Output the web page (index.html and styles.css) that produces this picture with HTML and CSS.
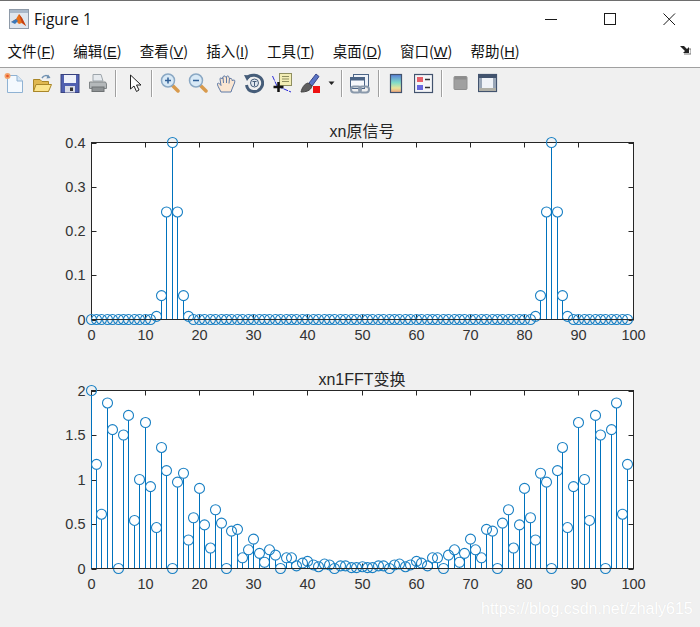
FILE: index.html
```html
<!DOCTYPE html>
<html lang="en">
<head>
    <meta charset="UTF-8">
    <title>Figure 1</title>
    <link rel="stylesheet" href="styles.css">
</head>
<body>
    <div class="window">
        <div class="titlebar">
            <svg class="app-icon" width="20" height="20" viewBox="0 0 20 20">
                <rect x="0.5" y="0.5" width="19" height="19" fill="#dfe6ee" stroke="#8e9aa8"/>
                <rect x="1" y="1" width="18" height="3" fill="#a9b8c9"/>
                <path d="M2 13 L7 10 L10 5 L13 9 L17 17 L13 14 L10 15 L7 12 Z" fill="#e8701a"/>
                <path d="M2 13 L7 10 L9 12 L6 15 Z" fill="#3b78b8"/>
                <path d="M10 5 L13 9 L17 17 L13 14 Z" fill="#c43f12"/>
            </svg>
            <span class="window-title">Figure 1</span>
            <div class="window-controls">
                <svg width="13" height="13" viewBox="0 0 13 13"><path d="M0 6.5H12" stroke="#1a1a1a" fill="none"/></svg>
                <svg width="13" height="13" viewBox="0 0 13 13"><rect x="0.5" y="0.5" width="11" height="11" stroke="#1a1a1a" fill="none"/></svg>
                <svg width="13" height="13" viewBox="0 0 13 13"><path d="M0.5 0.5L12 12M12 0.5L0.5 12" stroke="#1a1a1a" fill="none"/></svg>
            </div>
        </div>

        <div class="menubar">
            <span class="menu-item">文件(<u>F</u>)</span>
            <span class="menu-item">编辑(<u>E</u>)</span>
            <span class="menu-item">查看(<u>V</u>)</span>
            <span class="menu-item">插入(<u>I</u>)</span>
            <span class="menu-item">工具(<u>T</u>)</span>
            <span class="menu-item">桌面(<u>D</u>)</span>
            <span class="menu-item">窗口(<u>W</u>)</span>
            <span class="menu-item">帮助(<u>H</u>)</span>
            <svg class="dock-arrow" width="12" height="10" viewBox="0 0 12 10">
                <path d="M1 1 L5 1 L8 4 L10 2 L10 8 L4 8 L6 6 Z" fill="#222"/>
                <path d="M10 4 H12 V9 H5" stroke="#777" fill="none"/>
            </svg>
        </div>

        <div class="toolbar">
            <div class="tool-group group-file">
                <svg class="tool" viewBox="0 0 20 22">
                    <path d="M3.500 3.500 H13 L18.500 9 V20.500 H3.500 Z" fill="#f4f9fe" stroke="#8fb2d3"/>
                    <path d="M13 3.500 V9 H18.500" fill="#d5e5f4" stroke="#8fb2d3"/>
                    <circle cx="3.500" cy="4" r="3" fill="#f3a36a"/>
                    <circle cx="3.500" cy="4" r="1.300" fill="#e8572a"/>
                </svg>
                <svg class="tool" viewBox="0 0 20 22">
                    <path d="M1.500 7.500 H8 L10 9.500 H16.500 V19.500 H1.500 Z" fill="#e0b850" stroke="#a98628"/>
                    <path d="M1.500 19.500 L4 12.500 H19.500 L16.500 19.500 Z" fill="#fbe48c" stroke="#a98628"/>
                    <path d="M10 6 C12 3 15 3 17 5" stroke="#6d8fb0" stroke-width="1.500" fill="none"/>
                    <path d="M16 2.500 L18.500 6 L14.500 6.500 Z" fill="#6d8fb0"/>
                </svg>
                <svg class="tool" viewBox="0 0 20 22">
                    <rect x="1" y="2.500" width="18" height="18" fill="#4f5fb0" stroke="#39427f"/>
                    <rect x="4" y="3" width="12" height="8" fill="#eef1fa"/>
                    <rect x="5" y="14" width="10" height="6.500" fill="#d9dce8"/>
                    <rect x="10" y="15.500" width="3" height="3.500" fill="#333"/>
                </svg>
                <svg class="tool" viewBox="0 0 20 22">
                    <path d="M5 2.500 H13 L15 9 H5 Z" fill="#e6eaee" stroke="#9da5ab"/>
                    <path d="M1.500 10 H17.500 L18.500 12 V16.500 H1.500 Z" fill="#b4b8ba" stroke="#808587"/>
                    <rect x="4" y="15" width="12" height="4.500" fill="#8e9294" stroke="#6e7274"/>
                </svg>
            </div>
            <div class="tool-group group-select">
                <svg class="tool" viewBox="0 0 20 22">
                    <path d="M4.500 3 V17 L8 14 L10.500 19.500 L13 18 L10.500 13 H15 Z" fill="#fff" stroke="#222"/>
                </svg>
            </div>
            <div class="tool-group group-tools">
                <svg class="tool" viewBox="0 0 20 22">
                    <path d="M12 13 L18 19" stroke="#d89a4c" stroke-width="3.500" stroke-linecap="round"/>
                    <circle cx="8" cy="8.500" r="6.500" fill="#d8e9f6" stroke="#8aa8c4" stroke-width="1.500"/>
                    <path d="M5 8.500 H11 M8 5.500 V11.500" stroke="#2f5f96" stroke-width="1.500"/>
                </svg>
                <svg class="tool" viewBox="0 0 20 22">
                    <path d="M12 13 L18 19" stroke="#d89a4c" stroke-width="3.500" stroke-linecap="round"/>
                    <circle cx="8" cy="8.500" r="6.500" fill="#d8e9f6" stroke="#8aa8c4" stroke-width="1.500"/>
                    <path d="M5 8.500 H11" stroke="#2f5f96" stroke-width="1.500"/>
                </svg>
                <svg class="tool" viewBox="0 0 20 22">
                    <path d="M5 20 C3 16 1 13 1.500 11.500 C2.500 10.500 4 12 5 13.500 L4 7 C4 5.500 5.500 5.500 6 7 L7 5 C7.500 3.500 9 3.500 9.500 5 L10.500 4.500 C11.500 3.500 13 4 13 5.500 L14 6.500 C15.500 6 16 7 16 8.500 L18 8 C19 8 19 9.500 18.500 11 L16 17 L15 20 Z" fill="#fae6d2" stroke="#5f7aa6"/>
                    <path d="M7 5.500 L7.500 11 M10.500 5 L10.500 11 M13.500 6 L13 11.500" stroke="#5f7aa6" fill="none"/>
                </svg>
                <svg class="tool" viewBox="0 0 20 22">
                    <path d="M3 6 C6 2 15 2 18 8 C20.500 14 15 20.500 9 19.500 C5 19 3 16 2.500 13" fill="none" stroke="#465d79" stroke-width="3"/>
                    <path d="M0 3 L7 3.500 L3 9 Z" fill="#465d79"/>
                    <circle cx="10.500" cy="11" r="4" fill="#dfe6ee" stroke="#465d79"/>
                    <path d="M8.500 9.500 H12.500 M10.500 9.500 V14" stroke="#465d79"/>
                </svg>
                <svg class="tool" viewBox="0 0 20 22">
                    <rect x="7.500" y="1.500" width="12" height="12" fill="#f3eeb6" stroke="#8f8f60"/>
                    <path d="M10 4.500 H17 M10 7 H17 M10 9.500 H17" stroke="#8f8f60"/>
                    <path d="M0.500 4 L5 14 L19 20" stroke="#2b2bd8" fill="none" stroke-dasharray="5 1"/>
                    <path d="M6.500 10 V20 M1.500 15 H11.500" stroke="#111" stroke-width="2.500"/>
                </svg>
                <svg class="tool" viewBox="0 0 20 22">
                    <path d="M9 11 L16 2 L19 4.500 L12 14 Z" fill="#5a74c4" stroke="#39468a"/>
                    <path d="M8 11 C4 12 2 16 1 20 C5 20 11 19 12 14 Z" fill="#5f5f5f" stroke="#444"/>
                    <rect x="13" y="14" width="7" height="7" fill="#ee1111"/>
                </svg>
                <svg class="tool-caret" viewBox="0 0 7 22"><path d="M0.500 9.500 H6.500 L3.500 13 Z" fill="#222"/></svg>
            </div>
            <div class="tool-group group-link">
                <svg class="tool" viewBox="0 0 20 22">
                    <rect x="3.500" y="2.500" width="15" height="12" fill="#eef2f8" stroke="#4b6486"/>
                    <rect x="0.500" y="5.500" width="14" height="11" fill="#f6f8fc" stroke="#4b6486"/>
                    <rect x="1" y="6" width="13" height="2.500" fill="#4b6486"/>
                    <rect x="1" y="14.500" width="10" height="6" rx="3" fill="none" stroke="#8a99ab" stroke-width="2"/>
                    <rect x="9" y="14.500" width="10" height="6" rx="3" fill="none" stroke="#8a99ab" stroke-width="2"/>
                </svg>
            </div>
            <div class="tool-group group-insert">
                <svg class="tool" viewBox="0 0 20 22">
                    <defs>
                        <linearGradient id="rainbow" x1="0" y1="0" x2="0" y2="1">
                            <stop offset="0" stop-color="#5a7ed8"/>
                            <stop offset="0.45" stop-color="#7fdcc8"/>
                            <stop offset="0.75" stop-color="#e8e49a"/>
                            <stop offset="1" stop-color="#f0a078"/>
                        </linearGradient>
                    </defs>
                    <rect x="4.500" y="2.500" width="11" height="18" fill="url(#rainbow)" stroke="#42536e" stroke-width="1.200"/>
                </svg>
                <svg class="tool" viewBox="0 0 20 22">
                    <rect x="0.500" y="2.500" width="18" height="18" fill="#f5f6f8" stroke="#42536e" stroke-width="1.200"/>
                    <rect x="3" y="5" width="6" height="5" fill="#e8606a"/>
                    <rect x="3" y="13" width="6" height="5" fill="#6868e0"/>
                    <path d="M11 7.500 H16 M11 15.500 H16" stroke="#333" stroke-width="1.500"/>
                </svg>
            </div>
            <div class="tool-group group-panes">
                <svg class="tool" viewBox="0 0 20 22">
                    <rect x="4" y="4.500" width="13" height="13" rx="1" fill="#a0a0a0" stroke="#8f8f8f"/>
                    <rect x="4.500" y="5" width="12" height="2.500" fill="#8c8c8c"/>
                </svg>
                <svg class="tool" viewBox="0 0 20 22">
                    <rect x="0.500" y="2.500" width="18" height="17" fill="#f0f3f8" stroke="#42536e" stroke-width="1.200"/>
                    <rect x="1" y="3" width="17" height="3" fill="#42536e"/>
                    <rect x="1" y="6" width="3" height="10" fill="#9aa7b8"/>
                    <rect x="15" y="6" width="3" height="10" fill="#9aa7b8"/>
                    <rect x="1" y="16" width="17" height="3" fill="#b0b0a8"/>
                </svg>
            </div>
        </div>

        <div class="figure">
            <svg id="plotTop" class="plot" width="700" height="230"></svg>
            <svg id="plotBottom" class="plot" width="700" height="230"></svg>
            <div class="watermark">https://blog.csdn.net/zhaly615</div>
        </div>
    </div>

    <script src="plot.js"></script>
</body>
</html>
```

FILE: styles.css
```css
* {
    box-sizing: border-box;
}
html, body {
    margin: 0;
    height: 100%;
}
body {
    font-family: "Noto Sans CJK SC", "Liberation Sans", sans-serif;
    background-color: #f0f0f0;
    overflow: hidden;
}
.window {
    width: 700px;
    height: 627px;
    display: flex;
    flex-direction: column;
    border-top: 1px solid #6e6e6e;
}
.titlebar {
    height: 36px;
    padding-left: 9px;
    display: flex;
    align-items: center;
    background: white;
}
.app-icon {
    margin-right: 5px;
}
.window-title {
    font-family: "Open Sans", sans-serif;
    font-size: 15.500px;
    color: #111;
}
.window-controls {
    margin-left: auto;
    margin-right: 24px;
    display: flex;
    gap: 46px;
}
.menubar {
    height: 31px;
    padding: 0 8px 4px 7.500px;
    display: flex;
    align-items: center;
    gap: 18px;
    background: white;
    border-bottom: 1px solid #a0a0a0;
}
.menu-item {
    font-size: 14.500px;
    color: #111;
    white-space: nowrap;
}
.menu-item u {
    font-family: "Liberation Sans", sans-serif;
}
.dock-arrow {
    margin-left: auto;
    margin-right: 1px;
}
.toolbar {
    height: 30px;
    display: flex;
    align-items: center;
    background-color: #f0f0f0;
}
.tool-group {
    height: 27px;
    display: flex;
    align-items: center;
    gap: 8px;
    border-right: 1px solid #a0a0a0;
    box-shadow: 1px 0 0 #fff;
}
.group-file {
    padding: 0 7px 0 4px;
}
.group-select {
    padding: 0 5px 0 10px;
}
.group-tools {
    padding: 0 6px 0 8px;
}
.group-link {
    padding: 0 8px;
}
.group-insert {
    padding: 0 7px;
}
.group-panes {
    padding: 0 0 0 8px;
    border-right: none;
    box-shadow: none;
}
.tool {
    width: 20px;
    height: 22px;
    flex: none;
}
.tool-caret {
    width: 7px;
    height: 22px;
    flex: none;
}
.figure {
    position: relative;
    flex: 1;
    padding-top: 22px;
    display: flex;
    flex-direction: column;
    gap: 18px;
}
.plot {
    display: block;
    flex: none;
}
.plot text {
    font-family: "Liberation Sans", "Noto Sans CJK SC", sans-serif;
    font-size: 14.500px;
    fill: #333;
}
.plot .plot-title {
    font-size: 16px;
    text-anchor: middle;
    fill: #262626;
}
.plot .axis-box {
    fill: #fff;
    stroke: #262626;
}
.plot .tick {
    stroke: #262626;
}
.plot .baseline {
    stroke: #262626;
}
.plot .stem {
    stroke: #0072bd;
}
.plot .marker {
    fill: none;
    stroke: #1a80c4;
    stroke-width: 1.100;
}
.watermark {
    position: absolute;
    left: 481px;
    bottom: 9px;
    font-family: "Liberation Sans", sans-serif;
    font-size: 16px;
    color: #fff;
    text-shadow: 0 0 1px #dcdcdc;
    white-space: nowrap;
}
```

FILE: plot.js
```js
// stem plots for the two axes
const SVG_NS = "http://www.w3.org/2000/svg";
const LEFT = 91.5, RIGHT = 633.5;
const MARKER_R = 5;

function gaussSignal() {
    const values = new Array(100).fill(0);
    const peak = { 12: 0.007, 13: 0.054, 14: 0.243, 15: 0.4, 16: 0.243, 17: 0.054, 18: 0.007 };
    for (const n in peak) {
        values[n] = peak[n];
        values[+n + 70] = peak[n];
    }
    return values;
}

function fftSignal() {
    const half = [2, 1.17, 0.61, 1.86, 1.56, 0, 1.5, 1.72, 0.54, 1, 1.64, 0.92, 0.46, 1.36, 1.1, 0, 0.97, 1.07, 0.32, 0.57, 0.9,
        0.49, 0.23, 0.66, 0.51, 0, 0.42, 0.44, 0.12, 0.21, 0.33, 0.17, 0.07, 0.21, 0.15, 0, 0.12, 0.12, 0.03, 0.06, 0.08,
        0.04, 0.02, 0.05, 0.04, 0, 0.03, 0.03, 0.01, 0.01, 0.02];
    const values = [];
    for (let n = 0; n < 100; n++) {
        values.push(n <= 50 ? half[n] : half[100 - n]);
    }
    return values;
}

function add(svg, tag, attrs, text) {
    const el = document.createElementNS(SVG_NS, tag);
    for (const key in attrs) {
        el.setAttribute(key, attrs[key]);
    }
    if (text !== undefined) {
        el.textContent = text;
    }
    svg.appendChild(el);
    return el;
}

function drawPlot(id, opts) {
    const svg = document.getElementById(id);
    const top = 22.5, bottom = opts.bottom;
    const xPos = v => LEFT + (RIGHT - LEFT) * v / 100;
    const yPos = v => bottom - (bottom - top) * v / opts.yMax;

    add(svg, "rect", { class: "axis-box", x: LEFT, y: top, width: RIGHT - LEFT, height: bottom - top });
    add(svg, "text", { class: "plot-title", x: 362, y: top - 6 }, opts.title);

    for (let v = 0; v <= 100; v += 10) {
        const x = Math.round(xPos(v)) - 0.5;
        add(svg, "line", { class: "tick", x1: x, x2: x, y1: bottom, y2: bottom - 5 });
        add(svg, "line", { class: "tick", x1: x, x2: x, y1: top, y2: top + 5 });
        add(svg, "text", { x: x, y: bottom + 20, "text-anchor": "middle" }, v);
    }
    opts.yTicks.forEach(v => {
        const y = Math.round(yPos(v)) + 0.5;
        add(svg, "line", { class: "tick", x1: LEFT, x2: LEFT + 5, y1: y, y2: y });
        add(svg, "line", { class: "tick", x1: RIGHT, x2: RIGHT - 5, y1: y, y2: y });
        add(svg, "text", { x: LEFT - 6, y: y + 4.5, "text-anchor": "end" }, v);
    });

    opts.values.forEach((v, n) => {
        const x = Math.round(xPos(n)) - 0.5;
        const y = yPos(v);
        // the stem stops at the bottom of its hollow marker
        if (y + MARKER_R < bottom) {
            add(svg, "line", { class: "stem", x1: x, x2: x, y1: bottom, y2: y + MARKER_R });
        }
        add(svg, "circle", { class: "marker", cx: x, cy: y, r: MARKER_R });
    });
    add(svg, "line", { class: "baseline", x1: LEFT, x2: RIGHT, y1: bottom, y2: bottom });
}

drawPlot("plotTop", {
    title: "xn原信号",
    bottom: 199.5,
    yMax: 0.4,
    yTicks: [0, 0.1, 0.2, 0.3, 0.4],
    values: gaussSignal()
});

drawPlot("plotBottom", {
    title: "xn1FFT变换",
    bottom: 200.5,
    yMax: 2,
    yTicks: [0, 0.5, 1, 1.5, 2],
    values: fftSignal()
});
```
